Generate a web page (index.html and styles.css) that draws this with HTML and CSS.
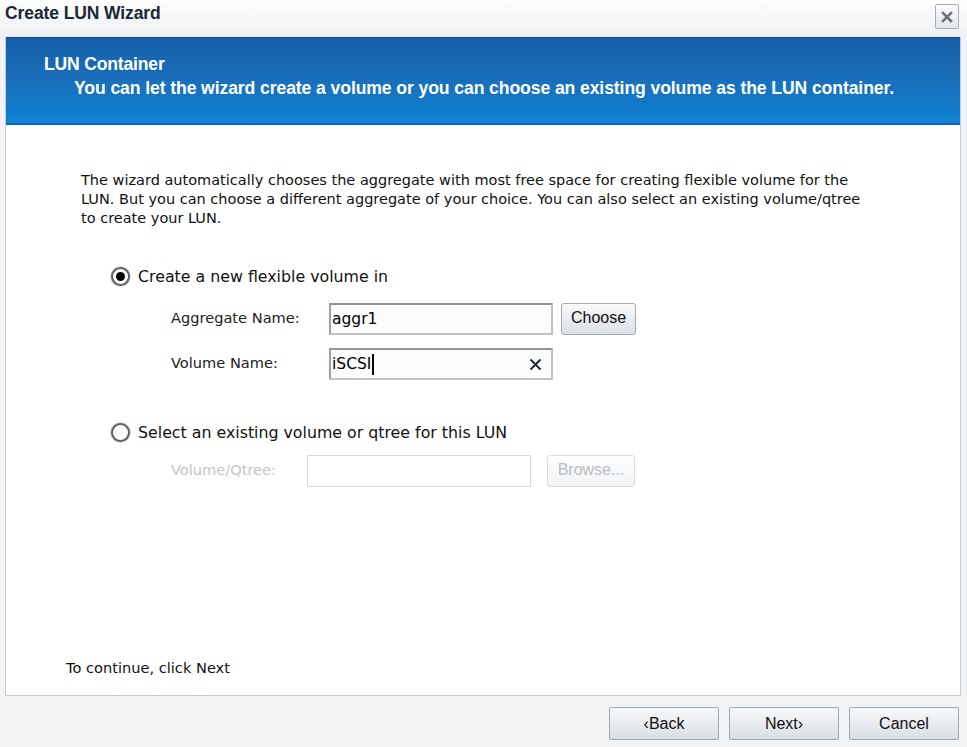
FILE: index.html
```html
<!DOCTYPE html>
<html>
<head>
<meta charset="utf-8">
<link rel="stylesheet" href="styles.css">
</head>
<body>
<div class="window">
  <div class="titlebar">
    <span class="title">Create LUN Wizard</span>
    <span class="close"><svg width="12" height="12" viewBox="0 0 12 12"><path d="M2 2 L10 10 M10 2 L2 10" stroke="#6c737b" stroke-width="2.6" stroke-linecap="square"/></svg></span>
  </div>
  <div class="panel">
    <div class="header">
      <div class="h-title">LUN Container</div>
      <div class="h-sub">You can let the wizard create a volume or you can choose an existing volume as the LUN container.</div>
    </div>
    <div class="content">
      <p class="intro">The wizard automatically chooses the aggregate with most free space for creating flexible volume for the LUN. But you can choose a different aggregate of your choice. You can also select an existing volume/qtree to create your LUN.</p>

      <div class="radio-row first">
        <span class="radio checked"></span>
        <span class="radio-label">Create a new flexible volume in</span>
      </div>
      <div class="field-row">
        <span class="flabel">Aggregate Name:</span>
        <span class="input">aggr1</span>
        <span class="btn small">Choose</span>
      </div>
      <div class="field-row second">
        <span class="flabel">Volume Name:</span>
        <span class="input"><span class="val">iSCSI</span><span class="caret"></span><svg class="clear" width="13" height="13" viewBox="0 0 13 13"><path d="M1.5 1.5 L11.5 11.5 M11.5 1.5 L1.5 11.5" stroke="#1a2230" stroke-width="1.8"/></svg></span>
      </div>

      <div class="radio-row third">
        <span class="radio"></span>
        <span class="radio-label">Select an existing volume or qtree for this LUN</span>
      </div>
      <div class="field-row disabled">
        <span class="flabel narrow">Volume/Qtree:</span>
        <span class="input dis"></span>
        <span class="btn small dis">Browse...</span>
      </div>

      <div class="continue">To continue, click Next</div>
    </div>
  </div>
  <div class="footer">
    <span class="btn big">‹Back</span>
    <span class="btn big">Next›</span>
    <span class="btn big">Cancel</span>
  </div>
</div>
</body>
</html>
```
FILE: styles.css
```css
html, body {
  margin: 0;
  padding: 0;
}
body {
  width: 967px;
  height: 747px;
  overflow: hidden;
  background: #f2f3f5;
  font-family: "DejaVu Sans", Tahoma, sans-serif;
  color: #000;
}
.window {
  display: flex;
  flex-direction: column;
  height: 747px;
}
.titlebar {
  height: 37px;
  box-sizing: border-box;
  display: flex;
  align-items: flex-start;
  justify-content: space-between;
  padding: 4px 8px 0 5px;
  background: linear-gradient(#fdfdfd, #eef0f2);
}
.title {
  font-family: "Liberation Sans", Arial, sans-serif;
  font-weight: bold;
  font-size: 17.5px;
  color: #1d2733;
  margin-top: -1px;
  letter-spacing: -0.1px;
}
.close {
  width: 24px;
  height: 25px;
  box-sizing: border-box;
  border: 1px solid #a7adb4;
  border-radius: 2px;
  background: linear-gradient(#fafbfc, #e3e6e9);
  display: flex;
  align-items: center;
  justify-content: center;
}
.panel {
  margin: 0 6px 0 5px;
  height: 659px;
  box-sizing: border-box;
  border: 1px solid #c3cad2;
  border-top: none;
  background: #fff;
  display: flex;
  flex-direction: column;
}
.header {
  height: 88px;
  box-sizing: border-box;
  border-top: 1px solid #0b4b8f;
  border-bottom: 2px solid #0a68bb;
  background: linear-gradient(#1560a8 0%, #1a6cb6 40%, #117ccb 85%, #0f86d6 100%);
  color: #fff;
  padding: 16px 0 0 38px;
  font-family: "Liberation Sans", Arial, sans-serif;
  font-weight: bold;
  font-size: 17.6px;
}
.h-title {
  line-height: 21px;
  letter-spacing: -0.2px;
}
.h-sub {
  line-height: 21px;
  margin-top: 3px;
  padding-left: 30px;
  letter-spacing: -0.1px;
}
.content {
  flex: 1;
  display: flex;
  flex-direction: column;
  padding: 46px 0 19px 75px;
}
.intro {
  margin: 0;
  width: 792px;
  font-size: 14.5px;
  line-height: 19px;
  color: #111;
}
.radio-row {
  display: flex;
  align-items: center;
  height: 20px;
  margin-left: 30px;
  gap: 8px;
}
.radio-row.first { margin-top: 38px; }
.radio-row.third { margin-top: 42px; }
.radio {
  width: 19px;
  height: 19px;
  box-sizing: border-box;
  border-radius: 50%;
  border: 2px solid #5d6166;
  background: #fff;
  box-shadow: 0 0 0 1px #d8dadd;
  display: flex;
  align-items: center;
  justify-content: center;
}
.radio.checked::after {
  content: "";
  width: 9px;
  height: 9px;
  border-radius: 50%;
  background: #000;
}
.radio-label {
  font-size: 15.8px;
  color: #111;
}
.field-row {
  display: flex;
  align-items: center;
  margin-left: 90px;
  margin-top: 17px;
  height: 32px;
}
.field-row.second { margin-top: 13px; }
.field-row.disabled { margin-top: 13px; }
.flabel {
  width: 158px;
  font-size: 14.6px;
  color: #222;
  padding-bottom: 3px;
}
.flabel.narrow { width: 136px; color: #c2c5c9; }
.input {
  width: 224px;
  height: 32px;
  box-sizing: border-box;
  border: 2px solid #bcc3cb;
  border-top-color: #8e949c;
  border-left-color: #9aa1a9;
  background: #fcfcfc;
  display: flex;
  align-items: center;
  padding-left: 1px;
  font-size: 15.5px;
  color: #000;
  position: relative;
}
.input.dis {
  border: 1px solid #d6dade;
  background: #fff;
}
.caret {
  display: inline-block;
  width: 2px;
  height: 21px;
  background: #000;
  margin-left: 1px;
}
.clear {
  position: absolute;
  right: 9px;
  top: 8px;
}
.btn {
  box-sizing: border-box;
  display: inline-flex;
  align-items: center;
  justify-content: center;
  font-family: "Liberation Sans", Arial, sans-serif;
  font-size: 16px;
  color: #111;
  border: 1px solid #a3aab2;
  border-radius: 3px;
  background: linear-gradient(#fafbfb, #e8ebee 55%, #dde1e5);
}
.btn.small {
  width: 75px;
  height: 32px;
  margin-left: 8px;
  padding-bottom: 3px;
}
.btn.small.dis {
  width: 88px;
  margin-left: 16px;
  color: #b9bcc0;
  border-color: #d8dce0;
  background: linear-gradient(#fdfdfd, #f1f3f5);
}
.continue {
  margin-top: auto;
  margin-left: -15px;
  font-size: 14.6px;
  color: #111;
}
.footer {
  flex: 1;
  display: flex;
  justify-content: flex-end;
  align-items: flex-start;
  gap: 10px;
  padding: 11px 8px 0 0;
}
.btn.big {
  width: 110px;
  height: 33px;
  border-radius: 2px;
  border-color: #9fa7af;
  background: linear-gradient(#f8f9fa, #e9ecef 50%, #dadee2);
}
```
